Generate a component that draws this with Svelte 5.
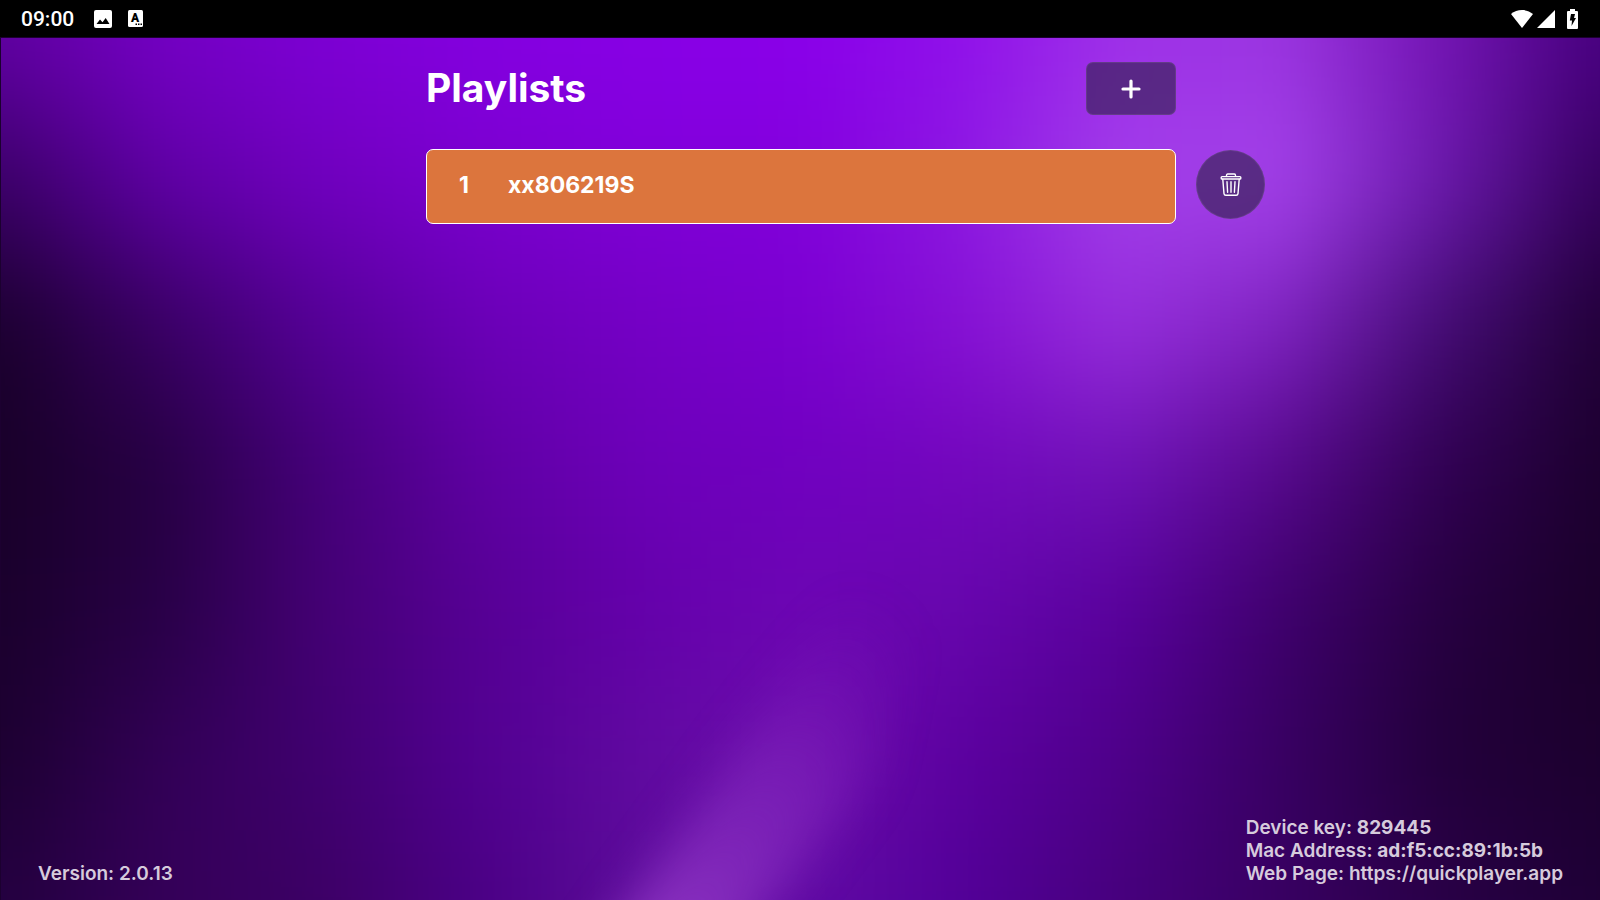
<script>
  const deviceKey = "829445";
  const macAddress = "ad:f5:cc:89:1b:5b";
  const webPage = "https://quickplayer.app";
  const version = "2.0.13";

  let playlists = [{ id: 1, name: "xx806219S" }];
  let selected = 1;

  // Backdrop colours, top to bottom. Each band is a left-to-right gradient,
  // and the blur filter melts the bands together.
  const bands = [
    ["#6000a2", "#7400c4", "#7d00d4", "#8400e0", "#8800e6", "#8a00ea", "#9010ea", "#9e30e8", "#9a34e0", "#7414b4", "#480080"],
    ["#3a0066", "#5e00a4", "#7000be", "#7a00ce", "#8000d8", "#8200dc", "#8c18e2", "#a23eea", "#a442ea", "#6c1aae", "#34005c"],
    ["#1a002c", "#380062", "#540096", "#6a00b6", "#7400c4", "#7a00d0", "#8610d4", "#962edc", "#7e22c0", "#440c74", "#200036"],
    ["#180028", "#260042", "#440078", "#5e00a2", "#6c00b8", "#7000c0", "#7206bc", "#6e12b6", "#56088c", "#300052", "#1c002e"],
    ["#1a002c", "#280046", "#440074", "#560094", "#6400aa", "#6c06b2", "#6606ac", "#58009c", "#3e006c", "#260040", "#1a002a"],
    ["#1c0030", "#320056", "#400070", "#520092", "#600aa0", "#6c0eac", "#5c00a0", "#4e008a", "#380062", "#22003a", "#1c002e"],
    ["#240040", "#340058", "#3c0064", "#4a0084", "#5c0c9a", "#600aa4", "#520098", "#46007c", "#380062", "#2a0048", "#1e0036"],
  ];

  function addPlaylist() {
    const id = playlists.length ? playlists[playlists.length - 1].id + 1 : 1;
    playlists = [...playlists, { id, name: `playlist${id}` }];
  }

  function removePlaylist(id) {
    playlists = playlists.filter((p) => p.id !== id);
  }
</script>

<div class="screen">
  <header class="status-bar">
    <div class="status-group">
      <time>09:00</time>
      <svg width="18" height="18" viewBox="0 0 18 18" aria-hidden="true">
        <rect width="18" height="18" rx="2" fill="#fff" />
        <path d="M2.5 14 L6 9.5 L8.5 12.3 L11.7 8 L15.5 14 Z" fill="#000" />
      </svg>
      <svg width="15" height="17" viewBox="0 0 15 17" aria-hidden="true">
        <rect width="15" height="17" rx="1.5" fill="#fff" />
        <text x="7" y="12" text-anchor="middle" class="key-letter">A</text>
        <path d="M7.5 13.5h1.5v1.5h-1.5z M10 13.5h1.5v1.5h-1.5z M12.5 13.5h1.5v1.5h-1.5z" fill="#000" />
      </svg>
    </div>
    <div class="status-group signals">
      <svg width="22" height="18" viewBox="0 0 22 18" aria-label="Wi-Fi">
        <path d="M0 4 C6 -1.3 16 -1.3 22 4 L11 18 Z" fill="#fff" />
      </svg>
      <svg width="18" height="18" viewBox="0 0 18 18" aria-label="Mobile signal">
        <path d="M18 0 V18 H0 Z" fill="#fff" />
      </svg>
      <svg class="battery" width="11" height="20" viewBox="0 0 11 20" aria-label="Battery charging">
        <path d="M3 0 H8 V2 H10 Q11 2 11 3 V19 Q11 20 10 20 H1 Q0 20 0 19 V3 Q0 2 1 2 H3 Z" fill="#fff" />
        <path d="M4 5 H8 L7 9 H9 L4.5 17 L5 11.5 H2.8 Z" fill="#000" />
      </svg>
    </div>
  </header>

  <main>
    <svg class="backdrop" viewBox="0 0 1600 862" preserveAspectRatio="none" aria-hidden="true">
      <defs>
        {#each bands as colours, i}
          <linearGradient id="band-{i}" gradientUnits="userSpaceOnUse" x1="0" y1="0" x2="1600" y2="0">
            {#each colours as colour, n}
              <stop offset="{n * 10}%" stop-color={colour} />
            {/each}
          </linearGradient>
        {/each}
        <linearGradient id="beam" gradientUnits="userSpaceOnUse" x1="640" y1="880" x2="870" y2="560">
          <stop offset="0" stop-color="#9a40cc" stop-opacity="0.75" />
          <stop offset="0.5" stop-color="#8c30c4" stop-opacity="0.45" />
          <stop offset="1" stop-color="#7a14b8" stop-opacity="0" />
        </linearGradient>
        <filter id="melt" color-interpolation-filters="sRGB" filterUnits="userSpaceOnUse" x="-300" y="-300" width="2200" height="1500">
          <feGaussianBlur stdDeviation="30 60" />
        </filter>
        <filter id="soft" color-interpolation-filters="sRGB" filterUnits="userSpaceOnUse" x="300" y="300" width="900" height="900">
          <feGaussianBlur stdDeviation="24" />
        </filter>
      </defs>
      <g filter="url(#melt)">
        {#each bands as _, i}
          <rect x="-200" y={i === 0 ? -200 : i * 144 - 72} width="2000" height={i === 0 || i === bands.length - 1 ? 272 : 145} fill="url(#band-{i})" />
        {/each}
      </g>
      <path d="M580 940 L735 720 L850 560 L910 580 L865 740 L710 940 Z" fill="url(#beam)" filter="url(#soft)" />
    </svg>

    <div class="content">
      <div class="heading">
        <h1>Playlists</h1>
        <button class="add" aria-label="Add playlist" on:click={addPlaylist}>
          <svg width="20" height="20" viewBox="0 0 20 20" aria-hidden="true">
            <path d="M10 2 V18 M2 10 H18" stroke="#fff" stroke-width="3.2" stroke-linecap="round" />
          </svg>
        </button>
      </div>

      {#each playlists as playlist, i (playlist.id)}
        <button
          class="playlist"
          class:active={selected === playlist.id}
          on:click={() => (selected = playlist.id)}
        >
          <span class="number">{i + 1}</span>
          <span>{playlist.name}</span>
        </button>
        <button class="remove" aria-label="Delete {playlist.name}" on:click={() => removePlaylist(playlist.id)}>
          <svg width="22" height="24" viewBox="0 0 22 24" fill="none" stroke="#fff" stroke-width="1.4" stroke-linejoin="round" stroke-linecap="round" aria-hidden="true">
            <path d="M6.5 3.4 V2.4 Q6.5 1 7.7 1 H14.3 Q15.5 1 15.5 2.4 V3.4" />
            <rect x="1.2" y="3.6" width="19.6" height="2.4" rx="0.8" />
            <path d="M2.8 6.3 L4 20.6 Q4.2 22.2 5.8 22.2 H16.2 Q17.8 22.2 18 20.6 L19.2 6.3" />
            <path d="M7 8.8 L7.6 19.2 M11 8.8 V19.2 M15 8.8 L14.4 19.2" />
          </svg>
        </button>
      {/each}
    </div>

    <footer>
      <p>Version: {version}</p>
      <div>
        <p>Device key: <b>{deviceKey}</b></p>
        <p>Mac Address: <b>{macAddress}</b></p>
        <p>Web Page: {webPage}</p>
      </div>
    </footer>
  </main>
</div>

<style>
  :global(body) {
    margin: 0;
    background: #1c0030;
  }

  .screen {
    min-height: 100vh;
    display: flex;
    flex-direction: column;
    font-family: Inter, "Liberation Sans", sans-serif;
    color: #fff;
  }

  .status-bar {
    box-sizing: border-box;
    height: 37px;
    padding: 0 22px 0 21px;
    display: flex;
    align-items: center;
    justify-content: space-between;
    background: #000;
  }

  .status-group {
    display: flex;
    align-items: center;
    gap: 16px;
  }

  .signals {
    gap: 4px;
  }

  .battery {
    margin-left: 8px;
  }

  time {
    margin-right: 4px;
    font-family: Roboto, sans-serif;
    font-size: 21px;
    font-weight: 500;
  }

  .key-letter {
    font-family: Roboto, sans-serif;
    font-size: 12px;
    font-weight: 900;
    fill: #000;
  }

  main {
    position: relative;
    flex: 1;
    display: flex;
    flex-direction: column;
    justify-content: space-between;
    overflow: hidden;
    isolation: isolate;
    border-top: 1px solid #1c0030;
    border-left: 1px solid #1c0030;
  }

  .backdrop {
    position: absolute;
    inset: 0;
    z-index: -1;
    width: 100%;
    height: 100%;
  }

  .content {
    display: grid;
    grid-template-columns: 1fr minmax(0, 750px) 1fr;
    column-gap: 20px;
    row-gap: 34px;
    padding: 24px 0 0 1px;
  }

  .heading {
    grid-column: 2;
    display: flex;
    align-items: flex-start;
    justify-content: space-between;
  }

  h1 {
    margin: 0;
    font-size: 39px;
    line-height: 51px;
    font-weight: 700;
  }

  button {
    box-sizing: border-box;
    padding: 0;
    font: inherit;
    color: inherit;
    cursor: pointer;
  }

  .add,
  .remove {
    display: flex;
    align-items: center;
    justify-content: center;
    border: 1px solid rgba(110, 80, 140, 0.5);
    background: rgba(43, 31, 68, 0.6);
  }

  .add {
    width: 90px;
    height: 53px;
    border-radius: 7px;
  }

  .remove {
    grid-column: 3;
    width: 69px;
    height: 69px;
    margin-top: 1px;
    border-radius: 50%;
  }

  .playlist {
    grid-column: 2;
    height: 75px;
    padding: 0 32px 3px;
    display: flex;
    align-items: center;
    border: 1px solid rgba(110, 80, 140, 0.5);
    border-radius: 7px;
    background: rgba(43, 31, 68, 0.6);
    font-size: 23px;
    font-weight: 700;
    text-align: left;
  }

  .playlist.active {
    border-color: #fff;
    background: #dc753d;
  }

  .number {
    width: 49px;
  }

  footer {
    display: flex;
    align-items: flex-end;
    justify-content: space-between;
    padding: 0 37px 15px;
    font-size: 19px;
    line-height: 23px;
    font-weight: 600;
    color: #d6cbdc;
  }

  footer p {
    margin: 0;
  }

  b {
    font-weight: 700;
  }
</style>
